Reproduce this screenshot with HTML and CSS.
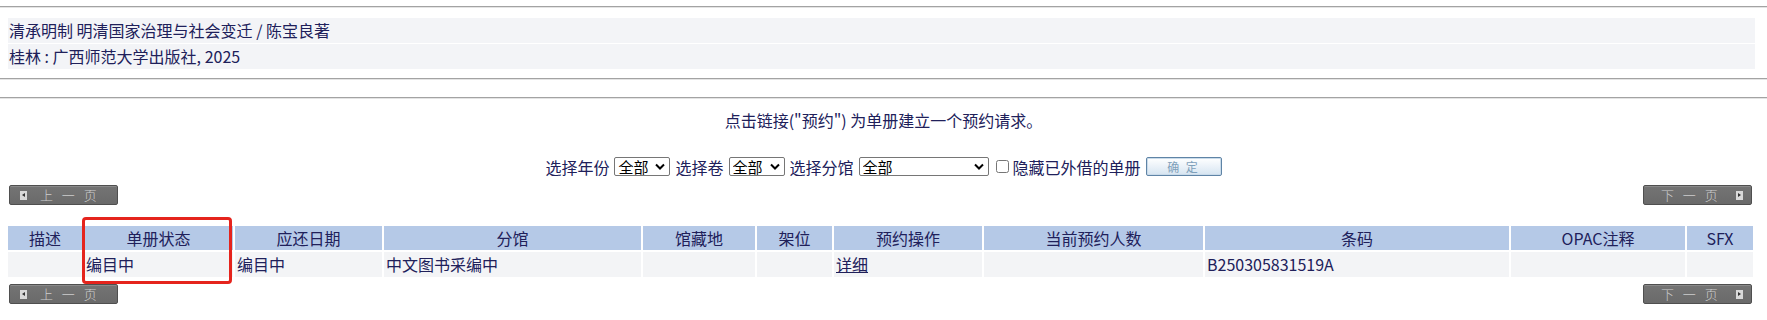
FILE: index.html
```html
<!DOCTYPE html>
<html lang="zh-CN">
<head>
<meta charset="utf-8">
<title>单册信息</title>
<link rel="stylesheet" href="styles.css">
</head>
<body>
<div class="page">
  <div class="rule rule-top"></div>
  <div class="bib">
    <div class="bib-row">清承明制 明清国家治理与社会变迁 / 陈宝良著</div>
    <div class="bib-row">桂林 : 广西师范大学出版社, 2025</div>
  </div>
  <div class="rule rule-a"></div>
  <div class="rule rule-b"></div>
  <p class="notice">点击链接("预约") 为单册建立一个预约请求。</p>
  <form class="filter">
    <span>选择年份</span>
    <select class="sel sel-s"><option>全部</option></select>
    <span>选择卷</span>
    <select class="sel sel-s"><option>全部</option></select>
    <span>选择分馆</span>
    <select class="sel sel-l"><option>全部</option></select>
    <label class="chk"><input type="checkbox"><span>隐藏已外借的单册</span></label>
    <button type="button" class="ok">确 定</button>
  </form>
  <div class="pager pager-top">
    <span class="pbtn prev"><i class="ico ico-l"></i><span class="ptxt">上 一 页</span></span>
    <span class="pbtn next"><span class="ptxt">下 一 页</span><i class="ico ico-r"></i></span>
  </div>
  <table class="items">
    <colgroup>
      <col style="width:74px"><col style="width:149px"><col style="width:147px"><col style="width:257px">
      <col style="width:112px"><col style="width:75px"><col style="width:148px"><col style="width:219px">
      <col style="width:304px"><col style="width:174px"><col style="width:66px">
    </colgroup>
    <thead>
      <tr><th>描述</th><th>单册状态</th><th>应还日期</th><th>分馆</th><th>馆藏地</th><th>架位</th><th>预约操作</th><th>当前预约人数</th><th>条码</th><th>OPAC注释</th><th>SFX</th></tr>
    </thead>
    <tbody>
      <tr><td></td><td>编目中</td><td>编目中</td><td>中文图书采编中</td><td></td><td></td><td><a href="#">详细</a></td><td></td><td>B250305831519A</td><td></td><td></td></tr>
    </tbody>
  </table>
  <div class="pager pager-bottom">
    <span class="pbtn prev"><i class="ico ico-l"></i><span class="ptxt">上 一 页</span></span>
    <span class="pbtn next"><span class="ptxt">下 一 页</span><i class="ico ico-r"></i></span>
  </div>
  <div class="highlight"></div>
</div>
</body>
</html>
```

FILE: styles.css
```css
html, body {
  margin: 0;
  padding: 0;
  background: #ffffff;
}
body {
  font-family: "Noto Sans CJK SC", "Noto Sans", sans-serif;
  font-size: 16px;
  color: #20205a;
}
.page {
  position: relative;
  width: 1767px;
  height: 320px;
  overflow: hidden;
}
.rule {
  height: 1px;
  background: #a3a3a3;
  border-bottom: 1px solid #e4e4e4;
}
.rule-top { margin-top: 6px; }
.rule-a { margin-top: 9px; }
.rule-b { margin-top: 17px; }

.bib {
  margin: 10px 12px 0 8px;
  display: flex;
  flex-direction: column;
  gap: 1px;
}
.bib-row {
  background: #f3f4f7;
  height: 25px;
  line-height: 25px;
  padding-left: 1px;
  white-space: nowrap;
}

.notice {
  margin: 9px 0 0;
  text-align: center;
  line-height: 24px;
  height: 24px;
}

.filter {
  margin: 24px 0 0;
  display: flex;
  justify-content: center;
  align-items: center;
  gap: 5px;
  height: 21px;
  line-height: 20px;
}
.sel {
  -webkit-appearance: none;
  appearance: none;
  box-sizing: border-box;
  height: 19px;
  font-family: "Noto Sans CJK SC", sans-serif;
  font-size: 15px;
  line-height: 17px;
  color: #000;
  border: 1px solid #767676;
  border-radius: 2px;
  background-color: #fff;
  background-image: url("data:image/svg+xml;utf8,<svg xmlns='http://www.w3.org/2000/svg' width='10' height='7' viewBox='0 0 10 7'><path d='M1 1.5 L5 5.5 L9 1.5' fill='none' stroke='black' stroke-width='2'/></svg>");
  background-repeat: no-repeat;
  background-position: right 4px center;
  padding: 0 0 0 3px;
}
.sel-s { width: 56px; }
.sel-l { width: 130px; }
.chk {
  display: flex;
  align-items: center;
  gap: 4px;
  margin-left: 2px;
}
.chk input {
  margin: 0;
  width: 13px;
  height: 13px;
}
.ok {
  width: 76px;
  height: 19px;
  padding: 0;
  border: 1px solid #5f84a6;
  border-radius: 2px;
  background: linear-gradient(#ffffff, #e6eff7 60%, #d6e4f0);
  color: #7fa0ba;
  font-family: "Noto Sans CJK SC", sans-serif;
  font-size: 12px;
  letter-spacing: 2px;
  line-height: 16px;
  box-shadow: inset 0 0 0 1px #c9dbea;
}

.pager {
  display: flex;
  justify-content: space-between;
  padding: 0 15px 0 9px;
}
.pager-top { margin-top: 8px; }
.pager-bottom { margin-top: 5px; }
.pbtn {
  box-sizing: border-box;
  width: 109px;
  height: 20px;
  display: flex;
  align-items: center;
  background: linear-gradient(#747474, #6a6a6a);
  border: 1px solid #4f4f4f;
  border-radius: 2px;
  box-shadow: inset 0 1px 0 #8a8a8a;
  color: #cdcdcd;
  font-size: 13px;
  font-weight: 300;
  line-height: 18px;
}
.prev { padding-left: 10px; }
.next { padding-left: 17px; }
.ptxt { letter-spacing: 3px; }
.prev .ptxt { margin-left: 13px; }
.next .ptxt { margin-right: 15px; }
.ico {
  position: relative;
  display: inline-block;
  width: 7px;
  height: 9px;
  background: #d9d9d9;
}
.ico::after {
  content: "";
  position: absolute;
  top: 2px;
  border-top: 2px solid transparent;
  border-bottom: 2px solid transparent;
}
.ico-l::after { left: 2px; border-right: 3px solid #333; }
.ico-r::after { left: 2px; border-left: 3px solid #333; }

.items {
  margin: 19px 0 0 6px;
  width: 1749px;
  table-layout: fixed;
  border-collapse: separate;
  border-spacing: 2px;
}
.items th {
  background: #b5c9e7;
  font-weight: normal;
  text-align: center;
  height: 24px;
  line-height: 24px;
  padding: 0;
  white-space: nowrap;
}
.items td {
  background: #f3f4f6;
  height: 25px;
  line-height: 25px;
  padding: 0 0 0 2px;
  white-space: nowrap;
}
.items a {
  color: #20205a;
  text-decoration: underline;
}

.highlight {
  position: absolute;
  left: 82px;
  top: 217px;
  width: 150px;
  height: 67px;
  box-sizing: border-box;
  border: 3px solid #e5241d;
  border-radius: 4px;
}
```
